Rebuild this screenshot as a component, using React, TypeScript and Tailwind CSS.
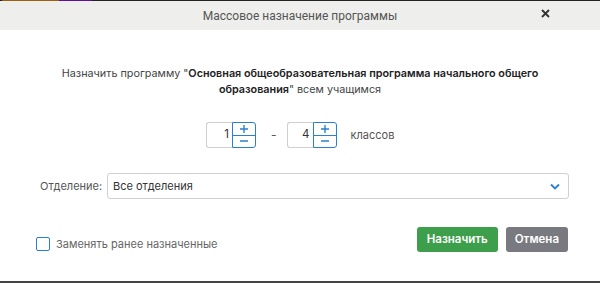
import { useState } from 'react';

const Spinner = ({ value }: { value: number }) => (
  <div className="flex h-[26px]">
    <div className="w-[26px] h-full border border-[#cfcfcf] border-r-0 rounded-l-[3px] flex items-center justify-end pr-[3px] text-[11.5px] text-[#333]">
      {value}
    </div>
    <div className="w-[24px] h-full flex flex-col border border-[#2a7fd0] rounded-r-[3px] overflow-hidden">
      <button className="flex-1 flex items-center justify-center border-b border-[#2a7fd0] text-[#2a7fd0]">
        <svg width="10" height="10" viewBox="0 0 10 10"><path d="M5 1v8M1 5h8" stroke="currentColor" strokeWidth="1.4" /></svg>
      </button>
      <button className="flex-1 flex items-center justify-center text-[#2a7fd0]">
        <svg width="10" height="10" viewBox="0 0 10 10"><path d="M1 5h8" stroke="currentColor" strokeWidth="1.4" /></svg>
      </button>
    </div>
  </div>
);

const App = () => {
  const [replace, setReplace] = useState(false);

  return (
    <div className="w-[600px] h-[283px] bg-white flex flex-col font-['Inter',sans-serif] overflow-hidden">
      {/* top strip */}
      <div className="h-px flex bg-[#222]">
        <div className="w-[2px]" />
        <div className="w-[57px] bg-[#9a6010]" />
        <div className="w-[33px] bg-[#5a10a0]" />
      </div>

      {/* Header */}
      <div className="h-[29px] bg-[#eeeeec] flex items-center relative">
        <div className="flex-1 text-center text-[12px] text-[#555] font-['Roboto',sans-serif]">
          Массовое назначение программы
        </div>
        <button className="absolute right-[50px] top-[8px] text-[#333]">
          <svg width="9" height="9" viewBox="0 0 9 9"><path d="M1 1l7 7M8 1l-7 7" stroke="currentColor" strokeWidth="1.8" /></svg>
        </button>
      </div>

      <div className="flex-1 flex flex-col">
        <p className="mt-[36px] px-[44px] text-center text-[10.8px] leading-[16px] text-[#444]">
          Назначить программу "<b className="font-semibold text-[#222]">Основная общеобразовательная программа начального общего образования</b>" всем учащимся
        </p>

        <div className="mt-[24px] flex items-center pl-[206px]">
          <Spinner value={1} />
          <span className="ml-[15px] mr-[10px] text-[12px] text-[#555]">-</span>
          <Spinner value={4} />
          <span className="ml-[14px] text-[11px] text-[#555]">классов</span>
        </div>

        <div className="mt-[25px] flex items-center pl-[40px] pr-[31px]">
          <span className="w-[67px] text-[11px] text-[#555]">Отделение:</span>
          <div className="flex-1 h-[26px] border border-[#d0d0d0] rounded-[3px] flex items-center justify-between pl-[5px] pr-[8px] text-[11px] text-[#333]">
            <span>Все отделения</span>
            <svg width="10" height="7" viewBox="0 0 10 7"><path d="M1 1.5l4 4 4-4" fill="none" stroke="#2a7fd0" strokeWidth="1.8" /></svg>
          </div>
        </div>

        <div className="mt-[28px] flex items-start pl-[36px] pr-[32px]">
          <label className="mt-[9px] flex items-center gap-[6px] cursor-pointer">
            <span
              onClick={() => setReplace(!replace)}
              className="w-[14px] h-[14px] border border-[#2a7fd0] rounded-[2px] bg-white"
            />
            <span className="text-[11px] text-[#666]">Заменять ранее назначенные</span>
          </label>
          <div className="ml-auto flex gap-[8px]">
            <button className="h-[25px] px-[10px] rounded-[3px] bg-[#3d9e4b] text-white text-[11.5px] font-semibold">Назначить</button>
            <button className="h-[25px] px-[9px] rounded-[3px] bg-[#787a80] text-white text-[11.5px] font-semibold">Отмена</button>
          </div>
        </div>
      </div>

      {/* bottom strip */}
      <div className="h-[2px] bg-[#444]" />
    </div>
  );
};

export default App;
